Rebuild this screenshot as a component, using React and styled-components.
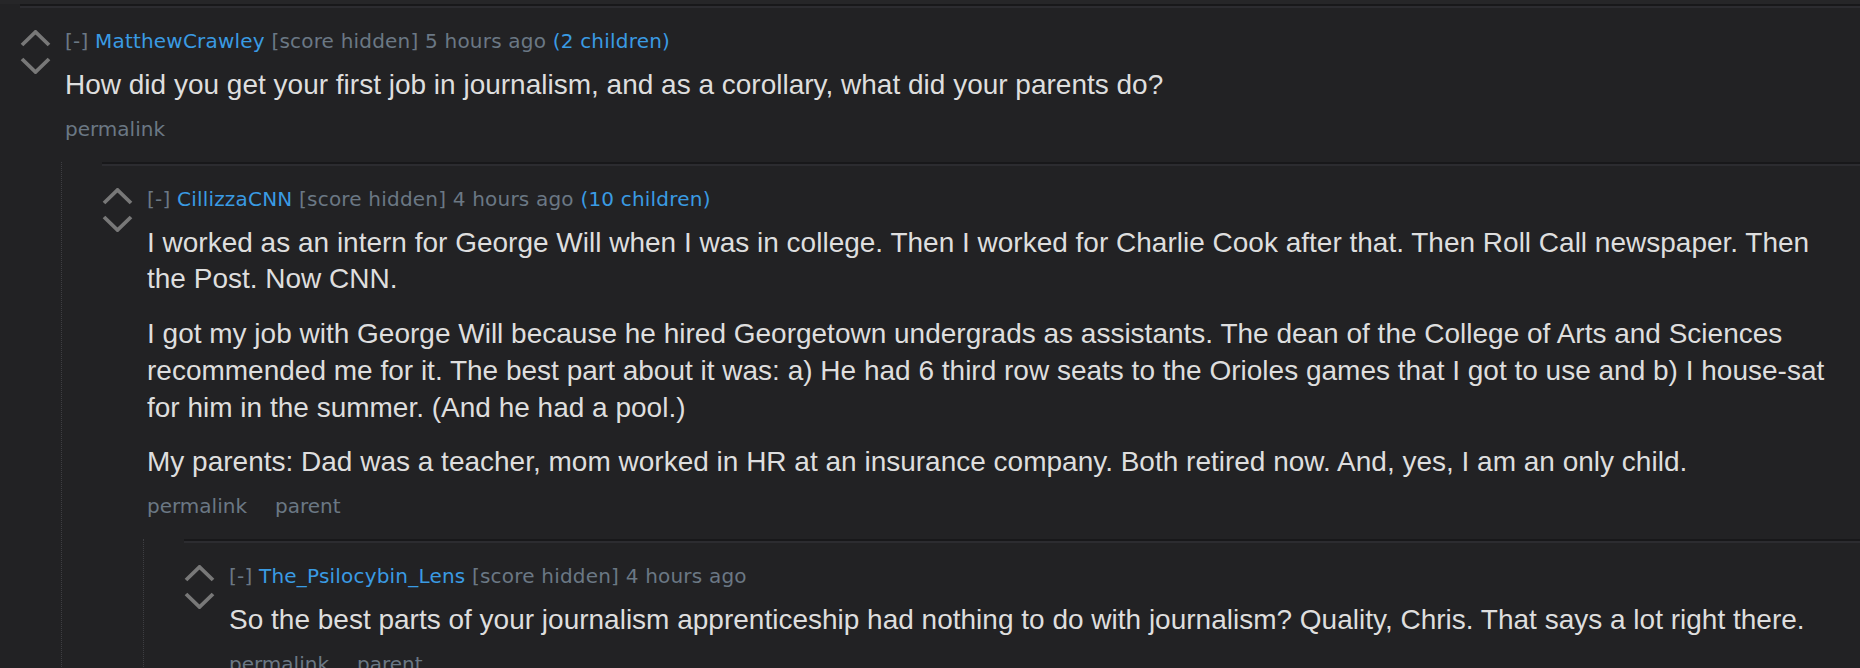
import React from 'react';
import styled, { createGlobalStyle } from 'styled-components';

const GlobalStyle = createGlobalStyle`
  html, body {
    margin: 0;
    padding: 0;
    background: #222224;
    overflow: hidden;
  }
`;

const Page = styled.div`
  border-top: 4px solid #262628;
  padding-left: 20px;
  height: 664px;
  overflow: hidden;
`;

const CommentBox = styled.div`
  border-top: 2px solid #18181a;
  box-shadow: inset 0 2px 0 #2c2c30;
  padding-top: 23px;
`;

const Row = styled.div`
  display: flex;
  align-items: flex-start;
`;

const Midcol = styled.div`
  width: 45px;
  flex-shrink: 0;
  display: flex;
  flex-direction: column;
  gap: 10px;
  padding-top: 1px;
`;

const ArrowSvg = styled.svg`
  display: block;
  width: 31px;
  height: 17px;
  filter: blur(0.3px);
`;

const Entry = styled.div`
  flex: 1;
  min-width: 0;
`;

const Tagline = styled.div`
  font-family: "DejaVu Sans", Verdana, sans-serif;
  font-size: 20px;
  line-height: 24px;
  letter-spacing: 0.2px;
  color: #6b7884;
  white-space: nowrap;
`;

const Author = styled.span`
  color: #3a9be3;
`;

const ChildCount = styled.span`
  color: #3a9be3;
`;

const Body = styled.div`
  margin-top: 14px;
  max-width: 1695px;
  font-family: "Liberation Sans", Arial, Helvetica, sans-serif;
  font-size: 28px;
  line-height: 36.7px;
  color: #dedede;
`;

const Para = styled.p`
  margin: 0 0 18px;

  &:last-child {
    margin-bottom: 0;
  }
`;

const Buttons = styled.ul`
  list-style: none;
  margin: 13px 0 0;
  padding: 0 0 21px;
  display: flex;
  gap: 28px;
  font-family: "DejaVu Sans", Verdana, sans-serif;
  font-size: 20px;
  line-height: 24px;
  color: #6b7884;
`;

const Children = styled.div`
  margin-left: 41px;
  border-left: 1px dotted #3e3e42;
  padding-left: 40px;
`;

const Arrow = ({ down }) => (
  <ArrowSvg viewBox="0 0 31 17">
    <polyline
      points={down ? '2,2 15.5,15 29,2' : '2,15 15.5,2 29,15'}
      fill="none"
      stroke="#787878"
      strokeWidth="3.8"
    />
  </ArrowSvg>
);

const comments = [
  {
    author: 'MatthewCrawley',
    age: '5 hours ago',
    children: '(2 children)',
    body: [
      'How did you get your first job in journalism, and as a corollary, what did your parents do?',
    ],
    buttons: ['permalink'],
    replies: [
      {
        author: 'CillizzaCNN',
        age: '4 hours ago',
        children: '(10 children)',
        body: [
          'I worked as an intern for George Will when I was in college. Then I worked for Charlie Cook after that. Then Roll Call newspaper. Then the Post. Now CNN.',
          'I got my job with George Will because he hired Georgetown undergrads as assistants. The dean of the College of Arts and Sciences recommended me for it. The best part about it was: a) He had 6 third row seats to the Orioles games that I got to use and b) I house-sat for him in the summer. (And he had a pool.)',
          'My parents: Dad was a teacher, mom worked in HR at an insurance company. Both retired now. And, yes, I am an only child.',
        ],
        buttons: ['permalink', 'parent'],
        replies: [
          {
            author: 'The_Psilocybin_Lens',
            age: '4 hours ago',
            body: [
              'So the best parts of your journalism apprenticeship had nothing to do with journalism? Quality, Chris. That says a lot right there.',
            ],
            buttons: ['permalink', 'parent'],
            replies: [],
          },
        ],
      },
    ],
  },
];

const Comment = ({ c }) => (
  <CommentBox>
    <Row>
      <Midcol>
        <Arrow />
        <Arrow down />
      </Midcol>
      <Entry>
        <Tagline>
          [-] <Author>{c.author}</Author> [score hidden] {c.age}
          {c.children && <> <ChildCount>{c.children}</ChildCount></>}
        </Tagline>
        <Body>
          {c.body.map((p, i) => (
            <Para key={i}>{p}</Para>
          ))}
        </Body>
        <Buttons>
          {c.buttons.map((b) => (
            <li key={b}>{b}</li>
          ))}
        </Buttons>
      </Entry>
    </Row>
    {c.replies.length > 0 && (
      <Children>
        {c.replies.map((r) => (
          <Comment key={r.author} c={r} />
        ))}
      </Children>
    )}
  </CommentBox>
);

export default function App() {
  return (
    <>
      <GlobalStyle />
      <Page>
        {comments.map((c) => (
          <Comment key={c.author} c={c} />
        ))}
      </Page>
    </>
  );
}
